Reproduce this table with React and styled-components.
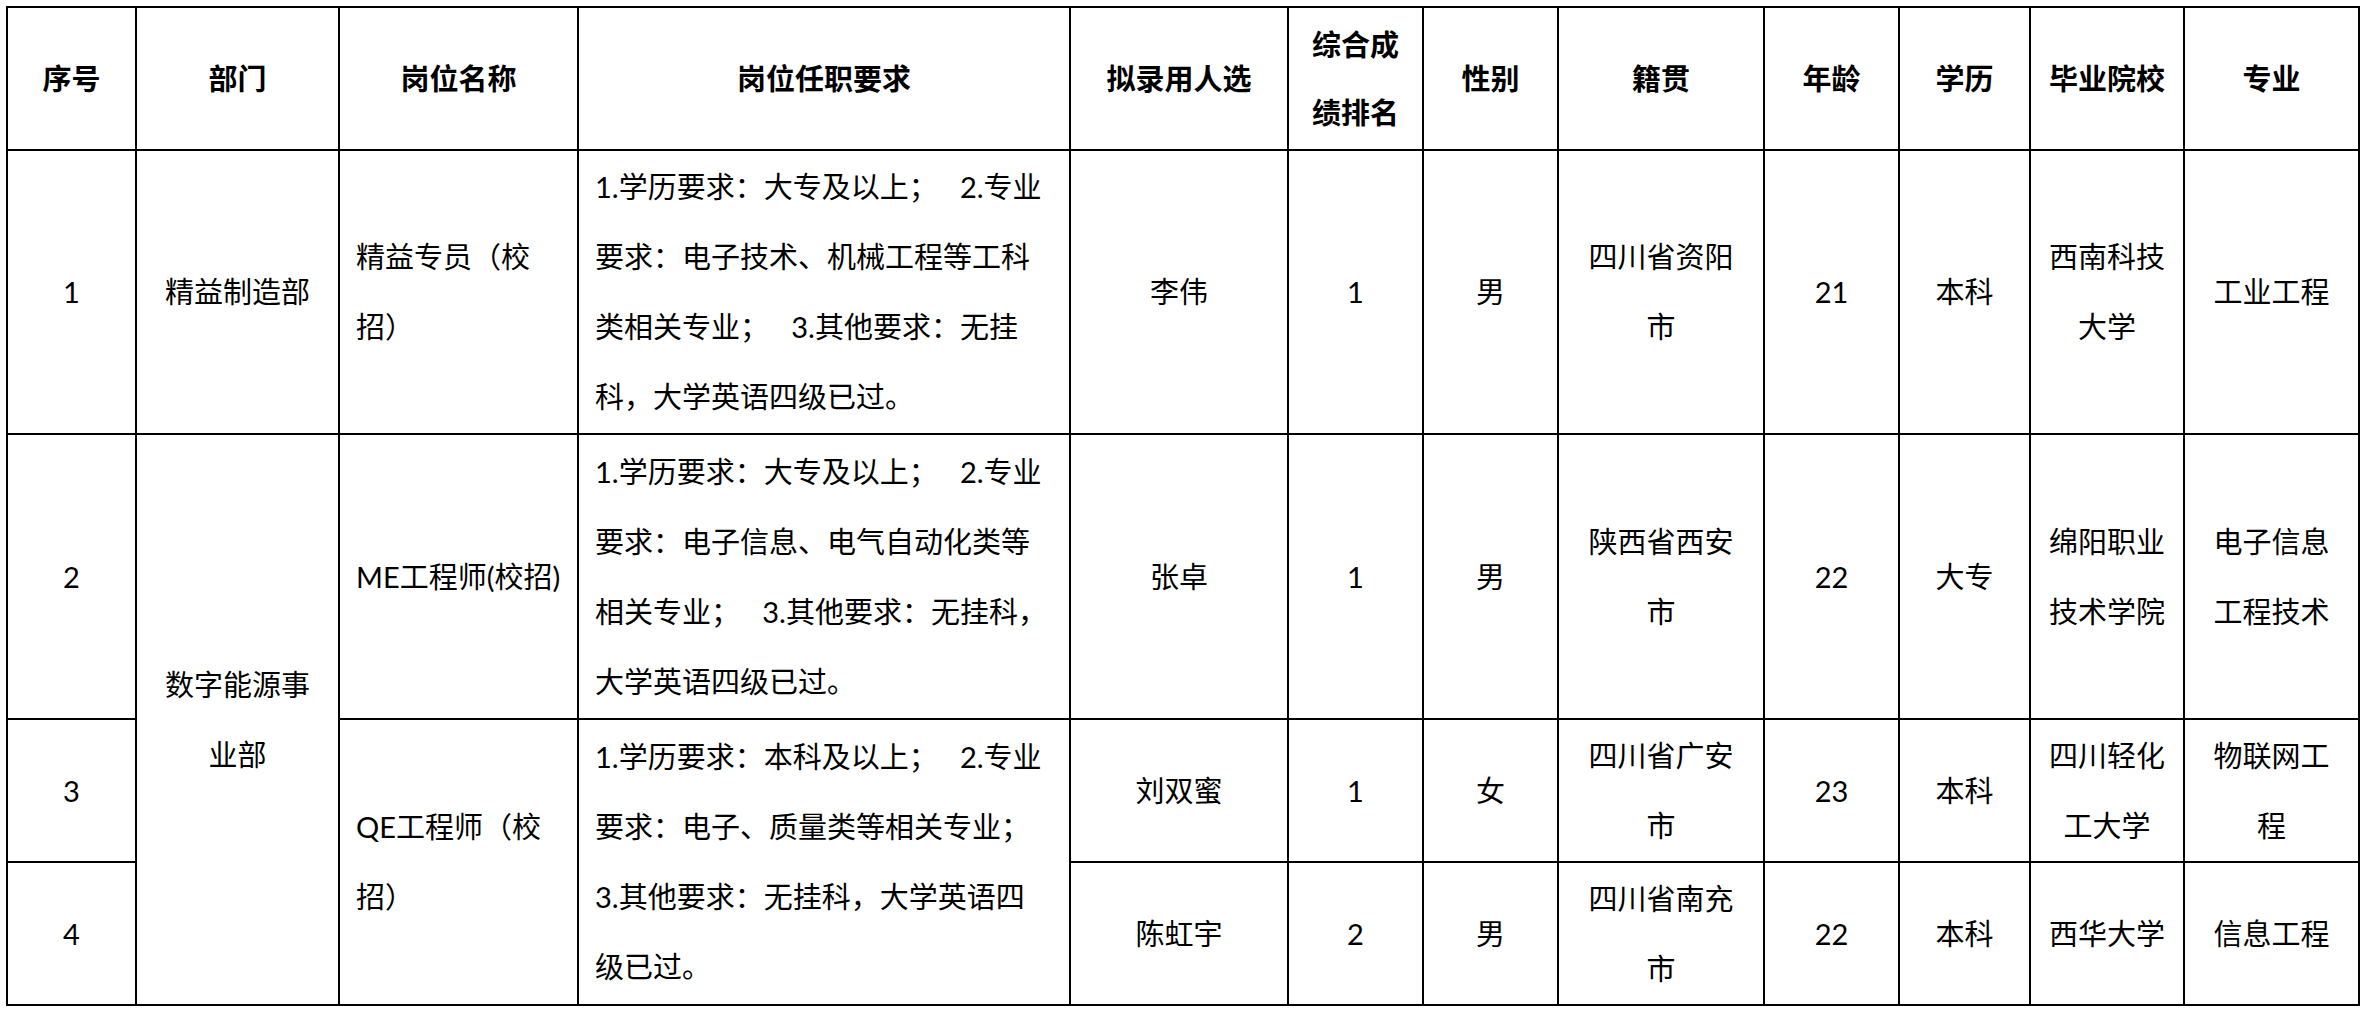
import React from "react";
import styled, { createGlobalStyle } from "styled-components";

// Page reset
const GlobalStyle = createGlobalStyle`
  html, body {
    margin: 0;
    padding: 0;
    background: #ffffff;
  }
  body {
    font-family: "Lato", "Noto Sans CJK SC", sans-serif;
    color: #000000;
  }
`;

const Sheet = styled.div`
  padding: 6px;
  background: #ffffff;
`;

const Table = styled.table`
  border-collapse: separate;
  border-spacing: 0;
  table-layout: fixed;
  width: 2354px;
  border-top: 2px solid #000;
  border-left: 2px solid #000;
  font-family: "Lato", "Noto Sans CJK SC", sans-serif;
  font-size: 29px;
`;

const Col = styled.col`
  width: ${(p) => p.$w}px;
`;

const Row = styled.tr`
  height: ${(p) => p.$h}px;
`;

const HeadCell = styled.th`
  border-right: 2px solid #000;
  border-bottom: 2px solid #000;
  padding: 0 8px;
  font-weight: 700;
  line-height: 68px;
  text-align: center;
  vertical-align: middle;
  color: #000;
`;

const Cell = styled.td`
  border-right: 2px solid #000;
  border-bottom: 2px solid #000;
  padding: 0 ${(p) => (p.$align === "left" ? "16px" : "6px")};
  font-weight: 400;
  line-height: 70px;
  text-align: ${(p) => p.$align || "center"};
  vertical-align: middle;
  color: #000;
`;

const Line = styled.span`
  display: block;
  white-space: pre;
`;

const widths = [129, 203, 239, 492, 218, 135, 135, 206, 135, 131, 154, 175];

// 多行文字按原表的换行位置拆开
function Lines({ text }) {
  return text.split("\n").map((t, i) => <Line key={i}>{t}</Line>);
}

export default function App() {
  return (
    <Sheet>
      <GlobalStyle />
      <Table>
        <colgroup>
          {widths.map((w, i) => (
            <Col key={i} $w={w} />
          ))}
        </colgroup>
        <tbody>
          <Row $h={143}>
            <HeadCell>序号</HeadCell>
            <HeadCell>部门</HeadCell>
            <HeadCell>岗位名称</HeadCell>
            <HeadCell>岗位任职要求</HeadCell>
            <HeadCell>拟录用人选</HeadCell>
            <HeadCell>
              <Lines text={"综合成\n绩排名"} />
            </HeadCell>
            <HeadCell>性别</HeadCell>
            <HeadCell>籍贯</HeadCell>
            <HeadCell>年龄</HeadCell>
            <HeadCell>学历</HeadCell>
            <HeadCell>毕业院校</HeadCell>
            <HeadCell>专业</HeadCell>
          </Row>

          <Row $h={284}>
            <Cell>1</Cell>
            <Cell>精益制造部</Cell>
            <Cell $align="left">
              <Lines text={"精益专员（校\n招）"} />
            </Cell>
            <Cell $align="left">
              <Lines
                text={
                  "1.学历要求：大专及以上；   2.专业\n要求：电子技术、机械工程等工科\n类相关专业；   3.其他要求：无挂\n科，大学英语四级已过。"
                }
              />
            </Cell>
            <Cell>李伟</Cell>
            <Cell>1</Cell>
            <Cell>男</Cell>
            <Cell>
              <Lines text={"四川省资阳\n市"} />
            </Cell>
            <Cell>21</Cell>
            <Cell>本科</Cell>
            <Cell>
              <Lines text={"西南科技\n大学"} />
            </Cell>
            <Cell>工业工程</Cell>
          </Row>

          <Row $h={285}>
            <Cell>2</Cell>
            <Cell rowSpan={3}>
              <Lines text={"数字能源事\n业部"} />
            </Cell>
            <Cell $align="left">ME工程师(校招)</Cell>
            <Cell $align="left">
              <Lines
                text={
                  "1.学历要求：大专及以上；   2.专业\n要求：电子信息、电气自动化类等\n相关专业；   3.其他要求：无挂科，\n大学英语四级已过。"
                }
              />
            </Cell>
            <Cell>张卓</Cell>
            <Cell>1</Cell>
            <Cell>男</Cell>
            <Cell>
              <Lines text={"陕西省西安\n市"} />
            </Cell>
            <Cell>22</Cell>
            <Cell>大专</Cell>
            <Cell>
              <Lines text={"绵阳职业\n技术学院"} />
            </Cell>
            <Cell>
              <Lines text={"电子信息\n工程技术"} />
            </Cell>
          </Row>

          <Row $h={143}>
            <Cell>3</Cell>
            <Cell $align="left" rowSpan={2}>
              <Lines text={"QE工程师（校\n招）"} />
            </Cell>
            <Cell $align="left" rowSpan={2}>
              <Lines
                text={
                  "1.学历要求：本科及以上；   2.专业\n要求：电子、质量类等相关专业；\n3.其他要求：无挂科，大学英语四\n级已过。"
                }
              />
            </Cell>
            <Cell>刘双蜜</Cell>
            <Cell>1</Cell>
            <Cell>女</Cell>
            <Cell>
              <Lines text={"四川省广安\n市"} />
            </Cell>
            <Cell>23</Cell>
            <Cell>本科</Cell>
            <Cell>
              <Lines text={"四川轻化\n工大学"} />
            </Cell>
            <Cell>
              <Lines text={"物联网工\n程"} />
            </Cell>
          </Row>

          <Row $h={143}>
            <Cell>4</Cell>
            <Cell>陈虹宇</Cell>
            <Cell>2</Cell>
            <Cell>男</Cell>
            <Cell>
              <Lines text={"四川省南充\n市"} />
            </Cell>
            <Cell>22</Cell>
            <Cell>本科</Cell>
            <Cell>西华大学</Cell>
            <Cell>信息工程</Cell>
          </Row>
        </tbody>
      </Table>
    </Sheet>
  );
}
